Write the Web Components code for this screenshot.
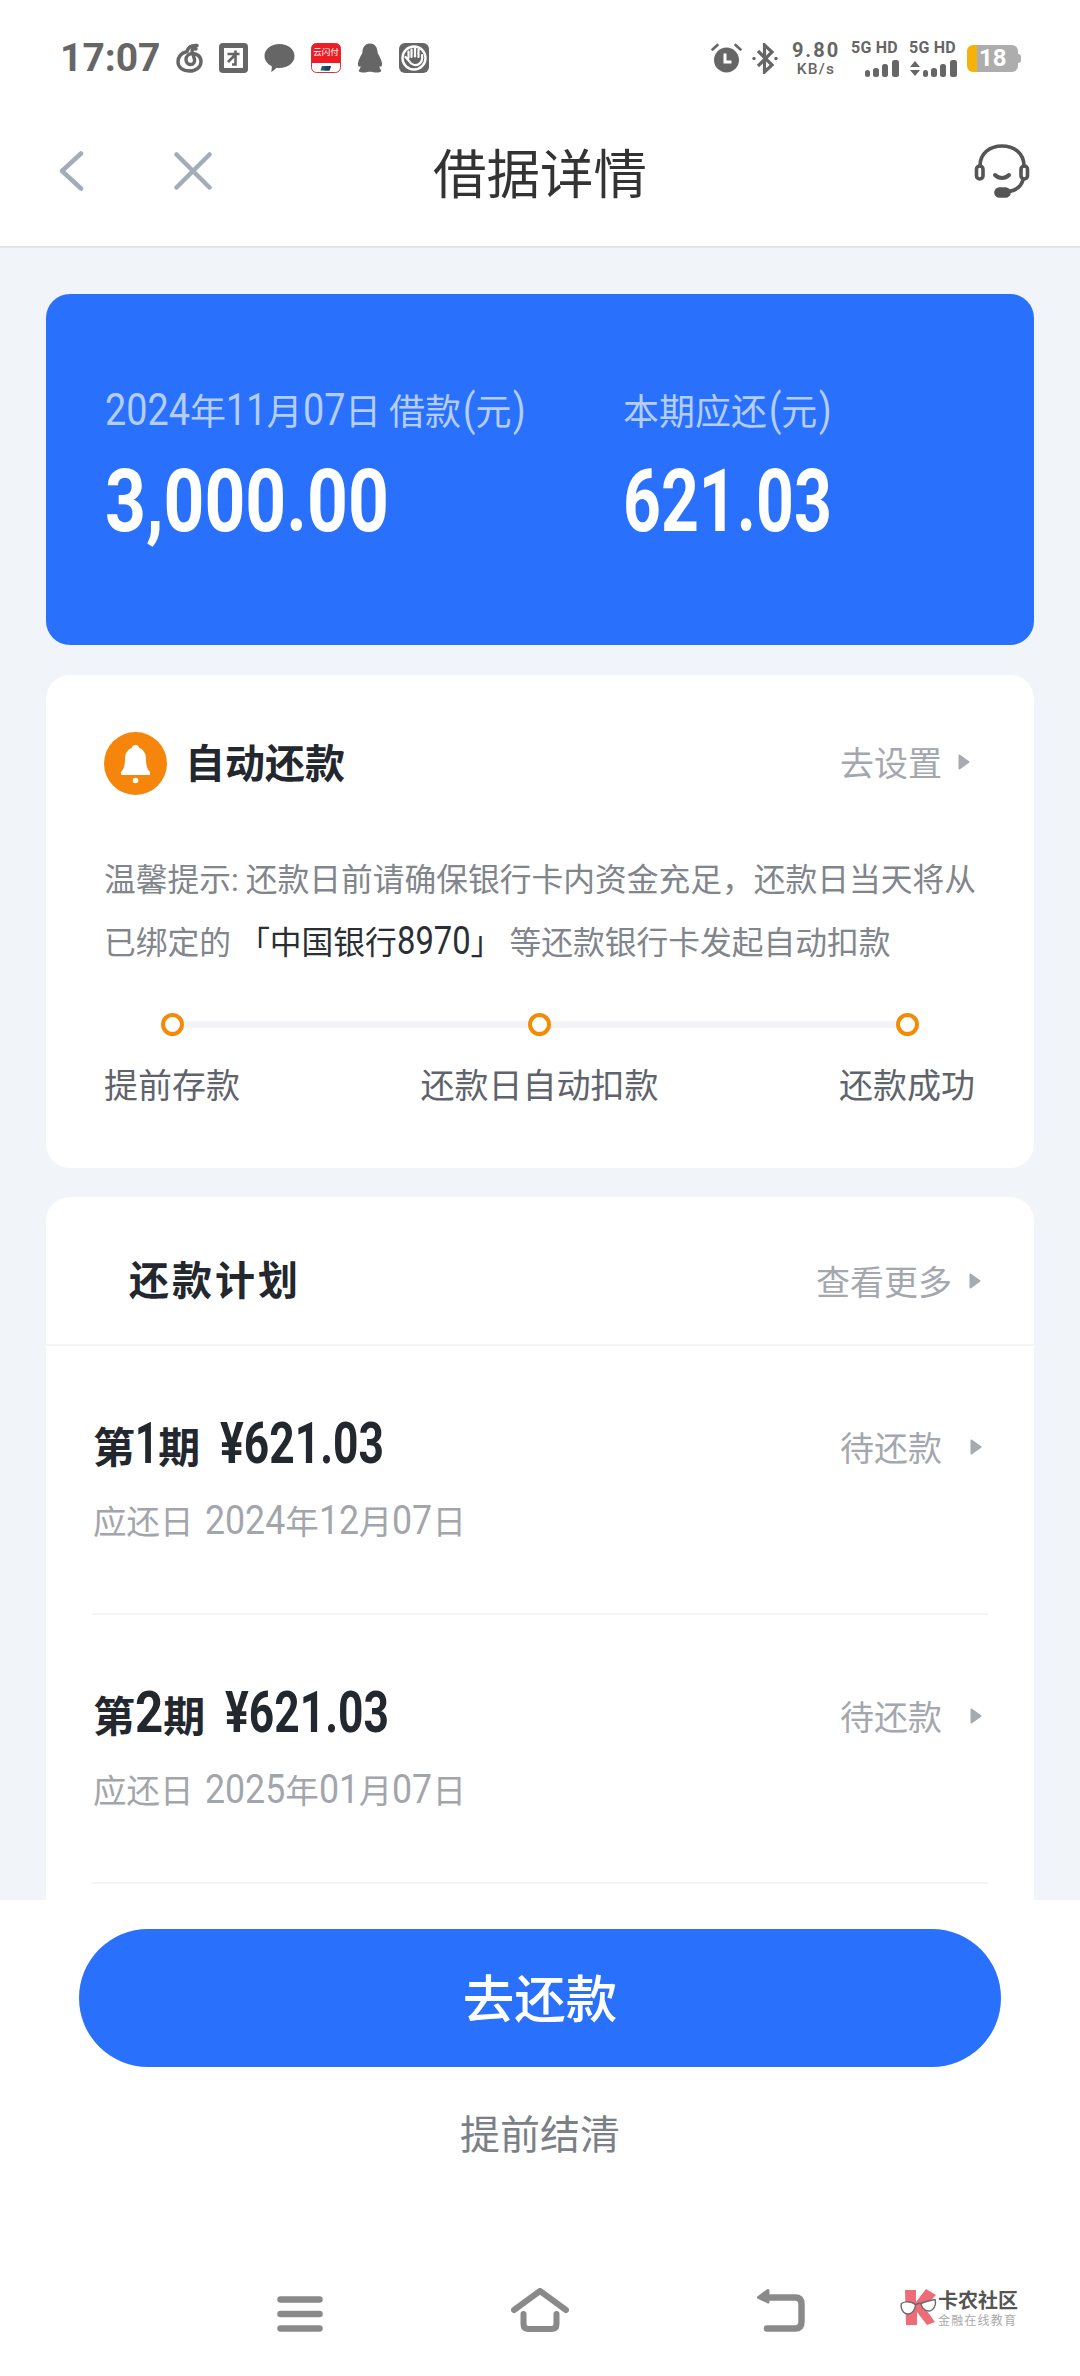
<!DOCTYPE html>
<html lang="zh-CN">
<head>
<meta charset="utf-8">
<title>借据详情</title>
<style>
  html, body { margin: 0; padding: 0; background: #f1f5fa; }
  body { font-family: "Noto Sans CJK SC", Roboto, sans-serif; color: #23272e; }
</style>
</head>
<body>
<x-app></x-app>

<script>
const CJK = '"Noto Sans CJK SC", "Noto Sans", sans-serif';

// Defines an element whose shadow root is built from a static string or a function of the element.
const def = (name, render) => customElements.define(name, class extends HTMLElement {
  constructor() {
    super();
    this.attachShadow({ mode: 'open' });
  }
  connectedCallback() {
    this.shadowRoot.innerHTML = typeof render === 'function' ? render(this) : render;
  }
});

// Tall, condensed digits next to CJK text: the glyphs are squeezed horizontally by the
// factor in the k attribute, and the element gives back the width that frees up.
customElements.define('x-num', class extends HTMLElement {
  constructor() {
    super();
    this.attachShadow({ mode: 'open' }).innerHTML = `<style>
      :host { display: inline-block; font-family: Roboto, sans-serif; font-size: 1.25em; line-height: 1; white-space: pre; vertical-align: baseline; }
      span { display: inline-block; transform-origin: 0 50%; }
    </style><span><slot></slot></span>`;
  }
  connectedCallback() {
    const k = parseFloat(this.getAttribute('k') || '0.85');
    const inner = this.shadowRoot.querySelector('span');
    const w = inner.getBoundingClientRect().width;
    inner.style.transform = `scaleX(${k})`;
    this.style.marginRight = `${-(1 - k) * w}px`;
  }
});

def('x-caret', `<style>
  :host { display: inline-flex; flex: none; }
  svg { display: block; }
</style><svg width="12" height="16" viewBox="0 0 12 16"><path d="M1.5 1.5 L10.5 8 L1.5 14.5 Z" fill="#a6abb2" stroke="#a6abb2" stroke-width="2" stroke-linejoin="round"/></svg>`);

def('x-status-bar', `<style>
  :host { display: flex; align-items: center; height: 116px; padding: 0 59px 0 60px; background: #fff; color: #666; box-sizing: border-box; }
  .time { font: 700 39px/1 Roboto, sans-serif; width: 116px; flex: none; }
  .left, .right { display: flex; align-items: center; }
  .left { gap: 16px; }
  .right { margin-left: auto; gap: 10px; }
  svg { display: block; flex: none; }
  .speed { text-align: center; width: 50px; margin-left: 3px; }
  .speed b { display: block; font: 700 20px/20px Roboto, sans-serif; letter-spacing: 2px; }
  .speed span { display: block; font: 500 15.5px/16px Roboto, sans-serif; letter-spacing: 1.2px; margin-top: 1px; }
  .sim { width: 48px; }
  .sim b { display: block; font: 700 16px/15px Roboto, sans-serif; white-space: nowrap; letter-spacing: .2px; }
  .sim svg { margin-top: 5px; margin-left: auto; }
  .batt { position: relative; width: 54px; height: 27px; }
  .batt i { position: absolute; inset: 0 3px 0 0; border-radius: 6px; background: linear-gradient(90deg, #f7b20a 0 10px, #adadad 10px); }
  .batt u { position: absolute; right: 0; top: 9px; width: 4px; height: 9px; border-radius: 0 3px 3px 0; background: #adadad; }
  .batt b { position: absolute; left: 12px; top: 0; font: 700 24px/27px Roboto, sans-serif; color: #fff; }
</style>
<div class="time">17:07</div>
<div class="left">
  <svg width="27" height="30" viewBox="0 0 27 30" fill="none" stroke="#666" stroke-width="3.4" stroke-linecap="round"><path d="M21 2.5 C15 2 12 4.5 11 8.5 C5.5 10 2 14 2 19 C2 24.5 7 28 13.5 28 C20 28 25 24 25 18.5 C25 13.5 21 10.5 17 10.5 C13 10.5 10 13 10 16.5 C10 19.5 12 21.5 14.5 21.5 C17.5 21.5 19 19 18.5 16.5 L16.2 8.5 C15.7 6.5 17.5 5.5 20 6"/></svg>
  <svg width="29" height="30" viewBox="0 0 29 30"><rect width="29" height="30" rx="4" fill="#666"/><rect x="5" y="5" width="19" height="20" fill="#fff"/><path d="M8.5 11 H20.5 M16.5 7.5 V21.5 H13 M16 12 L9 19" fill="none" stroke="#666" stroke-width="2.6"/></svg>
  <svg width="31" height="30" viewBox="0 0 31 30"><path d="M15.5 1 C24 1 30.5 6.3 30.5 13 C30.5 19.7 24 25 15.5 25 C14.5 25 13.5 25 12.5 24.8 C11 26.5 9 28.5 7 29 C7.8 27 8 24.8 7.6 23 C3.2 21 .5 17.3 .5 13 C.5 6.3 7 1 15.5 1 Z" fill="#666"/></svg>
  <svg width="30" height="30" viewBox="0 0 30 30"><rect x=".5" y=".5" width="29" height="29" rx="5" fill="#fff" stroke="#d8323c"/><path d="M.5 20 V5.5 A5 5 0 0 1 5.5 .5 H24.5 A5 5 0 0 1 29.5 5.5 V20 Z" fill="#ee1c25"/><text x="15" y="11.5" font-family="${CJK}" font-size="8.5" fill="#fff" text-anchor="middle">云闪付</text><path d="M11 23 H20 L18.5 27.5 H9.5 Z" fill="#1d5f74"/><path d="M14.8 23 H20 L18.5 27.5 H13.3 Z" fill="#14406b"/></svg>
  <svg width="26" height="30" viewBox="0 0 26 30"><path d="M13 0.5 C18.5 .5 20.5 5 20.7 10 C22.5 13.5 25.5 18.5 25 22 C24.7 24 23.5 24 22.5 23 C22.5 25 23.2 26.3 24.3 27.5 C24.5 29 21.5 29.7 18 29.5 C16 29.5 14.5 28.8 13 28.8 C11.5 28.8 10 29.5 8 29.5 C4.5 29.7 1.5 29 1.7 27.5 C2.8 26.3 3.5 25 3.5 23 C2.5 24 1.3 24 1 22 C.5 18.5 3.5 13.5 5.3 10 C5.5 5 7.5 .5 13 .5 Z" fill="#666"/></svg>
  <svg width="30" height="30" viewBox="0 0 30 30"><rect width="30" height="30" rx="6" fill="#666"/><circle cx="15" cy="15" r="11.5" fill="none" stroke="#fff" stroke-width="2.4"/><path d="M6.5 14 L10 18 C12 22 17 23 20 21 C23 19 23.5 15 23 12 M19.5 14 V6.5 M16 13.5 V5.5 M12.5 14 V6.5 M9.5 15 V8.5" fill="none" stroke="#fff" stroke-width="2.2" stroke-linecap="round"/></svg>
</div>
<div class="right">
  <svg width="31" height="31" viewBox="0 0 31 31"><circle cx="15.5" cy="17" r="12.5" fill="#666"/><path d="M14 10.5 V19 H20.5" fill="none" stroke="#fff" stroke-width="3"/><path d="M1.5 6.5 L6.5 2 M29.5 6.5 L24.5 2" stroke="#666" stroke-width="2.6" stroke-linecap="round"/></svg>
  <svg width="26" height="31" viewBox="0 0 26 31" fill="none" stroke="#666" stroke-width="3.2"><path d="M6 8 L20 22 L12.5 29 V2 L20 9 L6 23"/><circle cx="2" cy="15.5" r="1.7" fill="#666" stroke="none"/><circle cx="24" cy="15.5" r="1.7" fill="#666" stroke="none"/></svg>
  <div class="speed"><b>9.80</b><span>KB/s</span></div>
  <div class="sim"><b>5G HD</b>
    <svg width="34" height="17" viewBox="0 0 34 17" fill="#666"><rect x="0" y="10" width="5" height="7" rx="2.5"/><rect x="8" y="8" width="6" height="9" rx="2.5"/><rect x="17" y="4" width="6" height="13" rx="2.5"/><rect x="27" y="0" width="7" height="17" rx="2.5"/></svg>
  </div>
  <div class="sim"><b>5G HD</b>
    <svg width="48" height="17" viewBox="0 0 48 17" fill="#666"><path d="M6 1 L11 7 H1 Z M6 16 L11 10 H1 Z"/><rect x="14" y="10" width="5" height="7" rx="2.5"/><rect x="22" y="8" width="6" height="9" rx="2.5"/><rect x="31" y="4" width="6" height="13" rx="2.5"/><rect x="41" y="0" width="7" height="17" rx="2.5"/></svg>
  </div>
  <div class="batt"><i></i><u></u><b>18</b></div>
</div>`);

def('x-nav-header', `<style>
  :host { display: flex; align-items: center; height: 110px; padding: 0 50px 20px 59px; background: #fff; border-bottom: 2px solid #e3e6ea; position: relative; }
  svg { display: block; flex: none; }
  .close { margin-left: 90px; }
  h1 { position: absolute; left: 0; right: 0; top: 0; margin: 0; text-align: center; font: 400 53.5px/110px ${CJK}; color: #333; pointer-events: none; }
  .help { margin-left: auto; }
</style>
<svg width="25" height="40" viewBox="0 0 25 40" fill="none" stroke="#a3adba" stroke-width="4.5" stroke-linecap="round" stroke-linejoin="round"><path d="M22 2.5 L3 20 L22 37.5"/></svg>
<svg class="close" width="38" height="38" viewBox="0 0 38 38" fill="none" stroke="#a3adba" stroke-width="4.5" stroke-linecap="round"><path d="M2.5 2.5 L35.5 35.5 M35.5 2.5 L2.5 35.5"/></svg>
<h1>借据详情</h1>
<svg class="help" width="56" height="54" viewBox="0 0 56 54" fill="none" stroke="#555" stroke-width="3.6" stroke-linecap="round"><path d="M6 22 C6 9 16 2 28 2 C40 2 50 9 50 22"/><rect x="2.5" y="22" width="6.5" height="13" rx="3.2"/><rect x="47" y="22" width="6.5" height="13" rx="3.2"/><path d="M21 31 C25 35 31 35 35 31" stroke-width="4"/><path d="M49 36 C47 43 41 47 32 48" /><rect x="22" y="45" width="13" height="7" rx="3.5" fill="#555"/></svg>`);

def('x-hero-card', `<style>
  :host { display: grid; grid-template-columns: 518px 1fr; flex: none; height: 351px; box-sizing: border-box; padding: 87px 0 0 59px; border-radius: 24px; background: #2971fd; }
  .label { font: 400 36px/56px ${CJK}; color: #b5cdfb; white-space: nowrap; }
  .label x-num { font-size: 45px; }
  .label .paren { margin: 0 2px; }
  .value { height: 92px; font: 700 87px/92px Roboto, sans-serif; color: #fff; margin-top: 18px; white-space: nowrap; }
  .value x-num { font-size: 87px; }
</style>
<div><div class="label"><x-num k="0.84">2024</x-num>年<x-num k="0.8">11</x-num>月<x-num k="0.84">07</x-num>日 借款<x-num class="paren" k="0.8">(</x-num>元<x-num class="paren" k="0.8">)</x-num></div><div class="value"><x-num k="0.82">3,000.00</x-num></div></div>
<div><div class="label">本期应还<x-num class="paren" k="0.8">(</x-num>元<x-num class="paren" k="0.8">)</x-num></div><div class="value"><x-num k="0.76">621.03</x-num></div></div>`);

def('x-auto-card', `<style>
  :host { display: block; flex: none; box-sizing: border-box; height: 493px; padding: 57px 59px 0 58px; border-radius: 24px; background: #fff; }
  .head { display: flex; align-items: center; height: 63px; }
  .head svg { display: block; flex: none; }
  h2 { margin: 0 0 5px 18px; font: 700 40px/1 ${CJK}; color: #23272e; }
  .link { margin: 0 5px 4px auto; display: flex; align-items: center; gap: 16px; font: 400 34px/1 ${CJK}; color: #a4a8ae; }
  p { margin: 51px 0 0; font: 400 31.75px/63px ${CJK}; color: #81858c; white-space: nowrap; }
  p em { font-style: normal; color: #2a2e35; }
  .steps { position: relative; display: flex; justify-content: space-between; margin-top: 41px; }
  .track { position: absolute; left: 70px; right: 70px; top: 8px; height: 7px; background: #f3f4f7; }
  .step { position: relative; display: flex; flex-direction: column; align-items: center; font: 400 34px/44px ${CJK}; color: #5f646c; }
  .step i { display: block; box-sizing: border-box; width: 23px; height: 23px; border: 4.5px solid #f58a07; border-radius: 50%; background: #fff; margin-bottom: 26px; }
</style>
<div class="head">
  <svg width="63" height="63" viewBox="0 0 63 63"><circle cx="31.5" cy="31.5" r="31.5" fill="#f5860b"/><path d="M31.5 13 C34 13 35 14.5 35.3 16 C40 18 42 22 42 27 C42 33 43 37 46 40 L46 43 H17 L17 40 C20 37 21 33 21 27 C21 22 23 18 27.7 16 C28 14.5 29 13 31.5 13 Z" fill="#fff"/><circle cx="31.5" cy="48.5" r="2.8" fill="#fff"/></svg>
  <h2>自动还款</h2>
  <div class="link">去设置<x-caret></x-caret></div>
</div>
<p>温馨提示<x-num k="1" style="font-size:32px">:</x-num> 还款日前请确保银行卡内资金充足，还款日当天将从<br>已绑定的 <em>「中国银行<x-num k="0.84" style="font-size:39px">8970</x-num>」</em> 等还款银行卡发起自动扣款</p>
<div class="steps">
  <div class="track"></div>
  <div class="step"><i></i>提前存款</div>
  <div class="step"><i></i>还款日自动扣款</div>
  <div class="step"><i></i>还款成功</div>
</div>`);

def('x-plan-row', el => {
  const no = el.getAttribute('no');
  return `<style>
  :host { display: flex; justify-content: space-between; box-sizing: border-box; height: 269px; margin: 0 46px; padding: 68px 6px 0 1px; border-bottom: 2px solid #f3f4f6; }
  .title { font: 700 42px/60px ${CJK}; color: #23272e; white-space: nowrap; }
  .title x-num { font-size: 58px; }
  .gap { display: inline-block; width: 20px; }
  .date { margin-top: 23px; font: 400 33.5px/44px ${CJK}; color: #a2a6ac; white-space: nowrap; }
  .date x-num { font-size: 41px; }
  .date .first { margin-left: 4px; }
  .state { display: flex; align-items: center; gap: 28px; height: 44px; margin-top: 11px; font: 400 34px/44px ${CJK}; color: #a4a8ae; }
</style>
<div>
  <div class="title">第<x-num k="${no === '1' ? 0.7 : 0.85}">${no}</x-num>期<span class="gap"></span><x-num k="0.765">¥${el.getAttribute('amount')}</x-num></div>
  <div class="date">应还日 <x-num class="first" k="0.87">${el.getAttribute('year')}</x-num>年<x-num k="0.87">${el.getAttribute('month')}</x-num>月<x-num k="0.87">${el.getAttribute('day')}</x-num>日</div>
</div>
<div class="state">待还款<x-caret></x-caret></div>`;
});

def('x-plan-card', `<style>
  :host { display: block; flex: none; min-height: 800px; margin-top: -1px; border-radius: 24px 24px 0 0; background: #fff; }
  .head { display: flex; align-items: center; justify-content: space-between; box-sizing: border-box; height: 149px; padding: 15px 53px 0 83px; border-bottom: 2px solid #f3f4f6; }
  h2 { margin: 0; font: 700 40px/1 ${CJK}; letter-spacing: 3px; color: #23272e; }
  .link { display: flex; align-items: center; gap: 17px; margin-top: 5px; font: 400 34px/1 ${CJK}; color: #a4a8ae; }
</style>
<div class="head"><h2>还款计划</h2><div class="link">查看更多<x-caret></x-caret></div></div>
<slot></slot>`);

def('x-action-bar', `<style>
  :host { display: block; padding: 29px 79px 0; background: #fff; }
  .primary { height: 138px; border-radius: 69px; background: #2971fd; color: #fff; font: 500 51.5px/134px ${CJK}; text-align: center; }
  .secondary { margin-top: 35px; font: 400 40px/60px ${CJK}; color: #7b8087; text-align: center; }
</style>
<div class="primary">去还款</div>
<div class="secondary">提前结清</div>`);

def('x-system-nav', `<style>
  :host { position: relative; display: flex; justify-content: center; height: 46px; margin-top: 124px; background: #fff; }
  .slot { display: flex; justify-content: center; align-items: flex-end; width: 240px; }
  svg { display: block; }
  .mark { position: absolute; left: 900px; top: 2px; display: flex; gap: 1px; font-family: Roboto, ${CJK}; }
  .mark b { display: block; font-weight: 700; font-size: 20px; line-height: 20px; margin-top: 3px; color: #555; white-space: nowrap; }
  .mark span { display: block; font-size: 12px; line-height: 14px; letter-spacing: 1.2px; color: #a9a9a9; white-space: nowrap; margin-top: 3px; }
</style>
<div class="slot"><svg width="46" height="36" viewBox="0 0 46 36" fill="none" stroke="#8a8a8a" stroke-width="6.5" stroke-linecap="round"><path d="M3.5 3.5 H42.5 M3.5 18 H42.5 M3.5 32.5 H42.5"/></svg></div>
<div class="slot"><svg width="58" height="44" viewBox="0 0 58 44" fill="none" stroke="#8a8a8a" stroke-width="6" stroke-linecap="round" stroke-linejoin="round"><path d="M3 22 L29 3 L55 22"/><path d="M12.5 26 V36 Q12.5 41 17.5 41 H40.5 Q45.5 41 45.5 36 V26"/></svg></div>
<div class="slot"><svg width="50" height="44" viewBox="0 0 50 44" fill="none" stroke="#8a8a8a" stroke-width="6.5" stroke-linecap="round" stroke-linejoin="round"><path d="M12 9.5 H40 Q46.5 9.5 46.5 16 V34 Q46.5 40.5 40 40.5 H12"/><path d="M13 2.5 L3.5 9.5 L13 14 Z" fill="#8a8a8a" stroke-width="3"/></svg></div>
<div class="mark">
  <svg width="37" height="38" viewBox="0 0 37 38"><path d="M5 2 H16 V14 L26 1 L36 7 L24 19 L35 34 L27 37 L17 24 V37 H6 Z" fill="#ee6b78"/><path d="M15.5 17 C13 13.5 5 13 1.5 15.5 C0 20 3 26 8 26 C12 26 15 22 15.5 17 Z M21 15.5 C24 14 30 12.5 35 11.5 C36.5 16 34 23 28.5 23 C24 23 21.5 19 21 15.5 Z" fill="#fff" stroke="#6b6b6b" stroke-width="1.4"/><path d="M15.5 17 C17 15.5 19.5 15 21 15.5" fill="none" stroke="#6b6b6b" stroke-width="1.4"/></svg>
  <div><b>卡农社区</b><span>金融在线教育</span></div>
</div>`);

def('x-app', `<style>
  :host { display: flex; flex-direction: column; width: 1080px; height: 2376px; overflow: hidden; background: #f1f5fa; }
  main { flex: none; height: 1652px; overflow: hidden; display: flex; flex-direction: column; gap: 30px; box-sizing: border-box; padding: 46px 46px 0; }
  footer { flex: 1; background: #fff; }
</style>
<x-status-bar></x-status-bar>
<x-nav-header></x-nav-header>
<main>
  <x-hero-card></x-hero-card>
  <x-auto-card></x-auto-card>
  <x-plan-card>
    <x-plan-row no="1" amount="621.03" year="2024" month="12" day="07"></x-plan-row>
    <x-plan-row no="2" amount="621.03" year="2025" month="01" day="07"></x-plan-row>
  </x-plan-card>
</main>
<footer>
  <x-action-bar></x-action-bar>
  <x-system-nav></x-system-nav>
</footer>`);
</script>
</body>
</html>
